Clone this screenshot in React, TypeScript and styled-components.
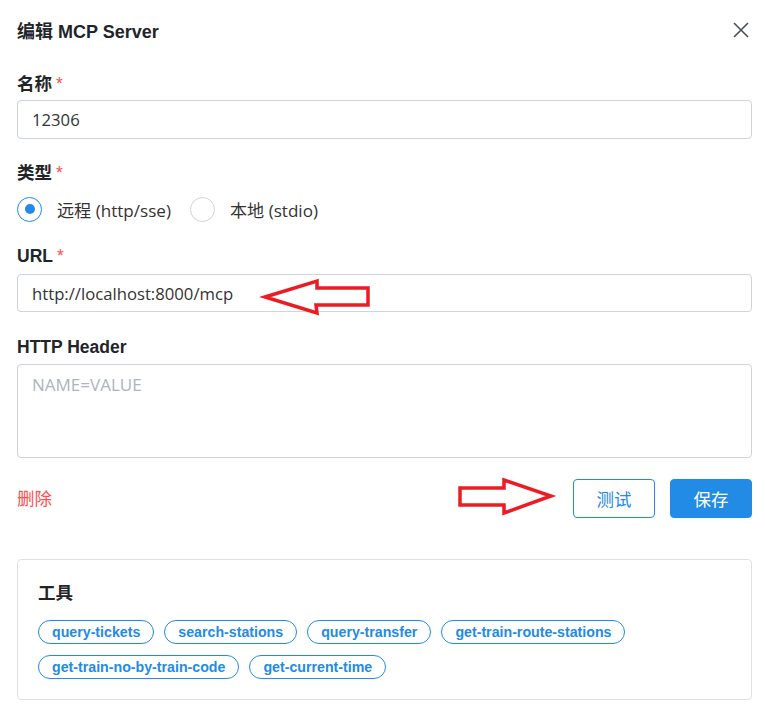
import React from "react";
import styled, { createGlobalStyle } from "styled-components";

const Global = createGlobalStyle`
  html, body { margin: 0; padding: 0; background: #ffffff; }
  body { font-family: "Liberation Sans", "Noto Sans CJK SC", Arial, sans-serif; color: #212529; }
  * { box-sizing: border-box; }
`;

const BLUE = "#228be6";
const BODY_FONT = `"Open Sans", "Noto Sans CJK SC", sans-serif`;
const LABEL_FONT = `"Liberation Sans", "Noto Sans CJK SC", sans-serif`;

const Page = styled.div`
  position: relative;
  width: 765px;
  height: 714px;
  padding: 0 13px 0 17px;
  display: flex;
  flex-direction: column;
  overflow: hidden;
`;

const Header = styled.div`
  height: 62px;
  padding-bottom: 2px;
  display: flex;
  align-items: center;
  justify-content: space-between;
`;

const Title = styled.h2`
  margin: 0;
  font-size: 18px;
  font-weight: 700;
  font-family: ${LABEL_FONT};
  color: #212529;
`;

const CloseButton = styled.button`
  width: 28px;
  height: 28px;
  margin-right: -3px;
  border: none;
  background: transparent;
  padding: 0;
  display: flex;
  align-items: center;
  justify-content: center;
  color: #495057;
`;

const Label = styled.div<{ $mt: number }>`
  margin-top: ${(p) => p.$mt}px;
  height: 24px;
  line-height: 26px;
  font-size: 17.5px;
  font-weight: 700;
  font-family: ${LABEL_FONT};
  color: #212529;
`;

const Star = styled.span`
  color: #fa5252;
  margin-left: 4px;
  font-weight: 400;
`;

const Input = styled.div<{ $mt: number; $h: number }>`
  margin-top: ${(p) => p.$mt}px;
  height: ${(p) => p.$h}px;
  border: 1px solid #ced4da;
  border-radius: 4px;
  padding: 0 14px;
  display: flex;
  align-items: center;
  font-family: ${BODY_FONT};
  font-size: 16.7px;
  color: #333;
`;

const TextArea = styled.div`
  margin-top: 6px;
  height: 94px;
  border: 1px solid #ced4da;
  border-radius: 4px;
  padding: 8px 14px;
  font-family: ${BODY_FONT};
  font-size: 17px;
  line-height: 24px;
  color: #adb5bd;
`;

const RadioGroup = styled.div`
  margin-top: 12px;
  height: 26px;
  display: flex;
  align-items: center;
  gap: 19px;
`;

const RadioItem = styled.label`
  display: flex;
  align-items: center;
  gap: 15px;
  font-family: ${BODY_FONT};
  font-size: 17.1px;
  color: #333;
`;

const RadioCircle = styled.span<{ $checked?: boolean }>`
  width: 25px;
  height: 25px;
  border-radius: 50%;
  border: 1px solid ${(p) => (p.$checked ? BLUE : "#ced4da")};
  display: flex;
  align-items: center;
  justify-content: center;
  &::after {
    content: "";
    width: 10px;
    height: 10px;
    border-radius: 50%;
    background: ${(p) => (p.$checked ? BLUE : "transparent")};
  }
`;

const Actions = styled.div`
  margin-top: 21px;
  height: 39px;
  display: flex;
  align-items: center;
  gap: 15px;
`;

const DangerLink = styled.span`
  flex: 1;
  color: #fa5252;
  font-family: "Noto Sans CJK SC", sans-serif;
  font-size: 17.5px;
  padding-bottom: 2px;
`;

const Button = styled.button<{ $filled?: boolean }>`
  width: 82px;
  height: 39px;
  border-radius: 4px;
  border: 1px solid ${BLUE};
  background: ${(p) => (p.$filled ? BLUE : "#fff")};
  color: ${(p) => (p.$filled ? "#fff" : BLUE)};
  font-family: "Noto Sans CJK SC", sans-serif;
  font-size: 17.5px;
  padding: 0;
`;

const Card = styled.div`
  margin-top: 41px;
  border: 1px solid #dee2e6;
  border-radius: 4px;
  padding: 20px 20px 20px 20px;
`;

const CardTitle = styled.div`
  height: 24px;
  line-height: 24px;
  font-size: 17.5px;
  font-weight: 700;
  font-family: "Noto Sans CJK SC", sans-serif;
  color: #212529;
`;

const ChipList = styled.div`
  margin-top: 16px;
  display: flex;
  flex-wrap: wrap;
  column-gap: 10px;
  row-gap: 11px;
`;

const Chip = styled.span`
  height: 24px;
  padding: 0 13px;
  border: 1px solid ${BLUE};
  border-radius: 12px;
  display: inline-flex;
  align-items: center;
  font-family: "Liberation Sans", Arial, sans-serif;
  font-size: 14.2px;
  font-weight: 700;
  color: ${BLUE};
`;

const Annotations = styled.svg`
  position: absolute;
  left: 0;
  top: 0;
  pointer-events: none;
`;

const tools = [
  "query-tickets",
  "search-stations",
  "query-transfer",
  "get-train-route-stations",
  "get-train-no-by-train-code",
  "get-current-time",
];

export default function App() {
  return (
    <>
      <Global />
      <Page>
        <Header>
          <Title>编辑 MCP Server</Title>
          <CloseButton aria-label="close">
            <svg width="18" height="18" viewBox="0 0 18 18">
              <path d="M2 2 L16 16 M16 2 L2 16" stroke="#495057" strokeWidth="1.6" fill="none" />
            </svg>
          </CloseButton>
        </Header>

        <Label $mt={9}>
          名称<Star>*</Star>
        </Label>
        <Input $mt={5} $h={39}>12306</Input>

        <Label $mt={21}>
          类型<Star>*</Star>
        </Label>
        <RadioGroup>
          <RadioItem>
            <RadioCircle $checked />
            远程 (http/sse)
          </RadioItem>
          <RadioItem>
            <RadioCircle />
            本地 (stdio)
          </RadioItem>
        </RadioGroup>

        <Label $mt={21}>
          URL<Star>*</Star>
        </Label>
        <Input $mt={7} $h={38}>http://localhost:8000/mcp</Input>

        <Label $mt={22}>HTTP Header</Label>
        <TextArea>NAME=VALUE</TextArea>

        <Actions>
          <DangerLink>删除</DangerLink>
          <Button>测试</Button>
          <Button $filled>保存</Button>
        </Actions>

        <Card>
          <CardTitle>工具</CardTitle>
          <ChipList>
            {tools.map((t) => (
              <Chip key={t}>{t}</Chip>
            ))}
          </ChipList>
        </Card>

        <Annotations width="765" height="714" viewBox="0 0 765 714">
          <polygon
            points="265,297 317,281 317,288 368,288 368,305 316,305 317,313"
            fill="none"
            stroke="#ec1c24"
            strokeWidth="3.5"
            strokeLinejoin="miter"
          />
          <polygon
            points="460,488 504,488 504,480 551,496 504,513 504,505 460,505"
            fill="none"
            stroke="#ec1c24"
            strokeWidth="3.5"
            strokeLinejoin="miter"
          />
        </Annotations>
      </Page>
    </>
  );
}
